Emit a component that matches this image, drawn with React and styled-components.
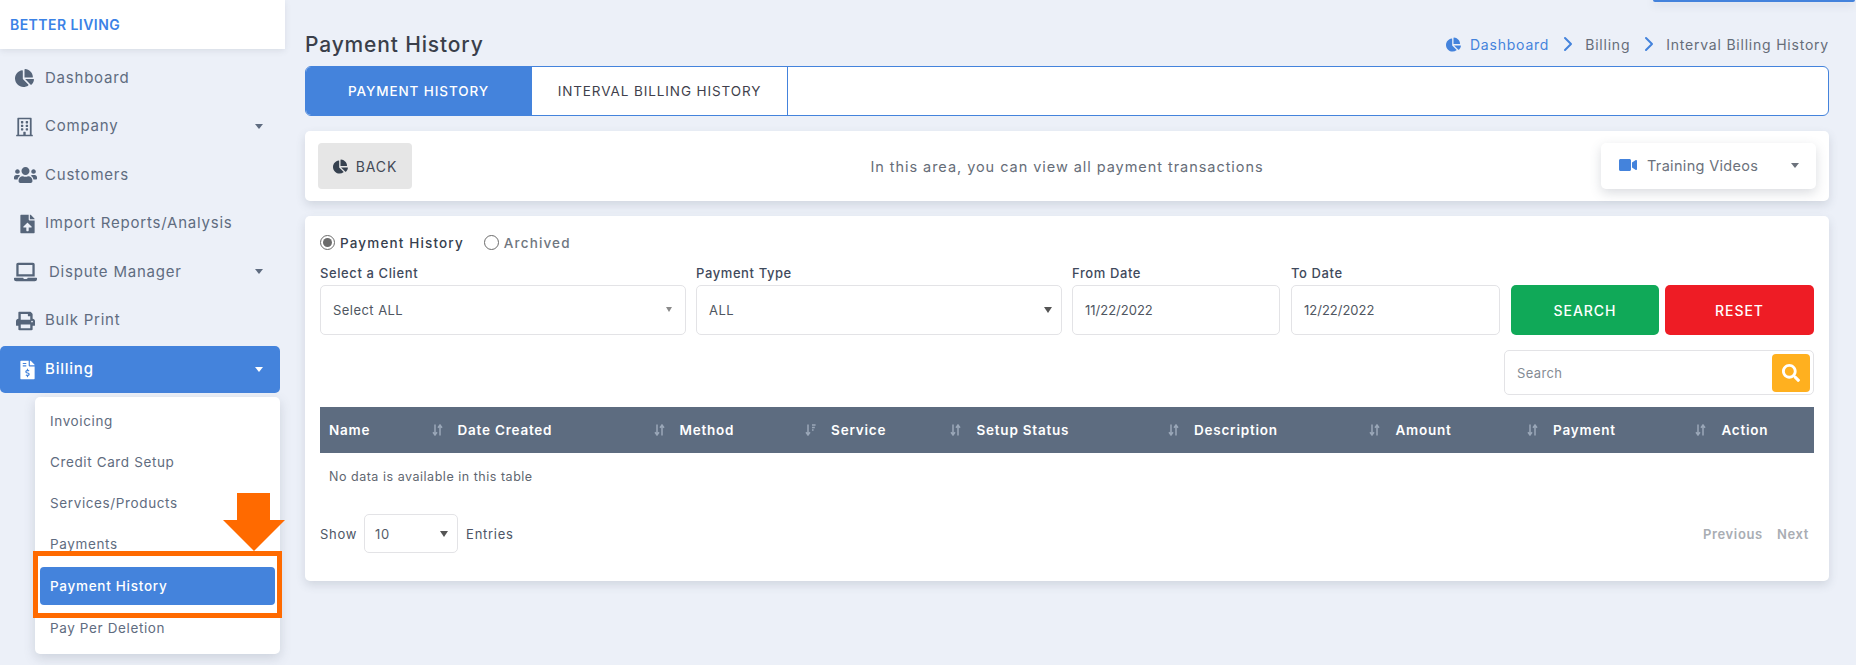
import React from 'react';
import styled, { createGlobalStyle } from 'styled-components';
import { FaChartPie, FaRegBuilding, FaUsers, FaFileUpload, FaLaptop, FaPrint, FaFileInvoiceDollar, FaVideo, FaSearch } from 'react-icons/fa';
import { ChevronRight } from 'lucide-react';

const Global = createGlobalStyle`
  html, body { margin: 0; padding: 0; background: #fff; }
  body { font-family: Inter, "Open Sans", sans-serif; overflow: hidden; }
  * { box-sizing: border-box; }
`;

const Page = styled.div`
  width: 1856px;
  height: 665px;
  background: #ecf0f8;
  display: flex;
  position: relative;
  overflow: hidden;
`;

const TopStrip = styled.div`
  position: absolute;
  top: 0;
  left: 1653px;
  width: 202px;
  height: 2px;
  background: #4483dc;
  border-radius: 0 0 4px 4px;
  box-shadow: 0 2px 8px rgba(60, 70, 90, 0.25);
`;

const Sidebar = styled.aside`
  width: 305px;
  flex: none;
  display: flex;
  flex-direction: column;
`;

const Brand = styled.div`
  width: 285px;
  height: 49px;
  background: #fff;
  box-shadow: 0 2px 6px rgba(80, 90, 110, 0.12);
  padding: 0 0 0 10px;
  display: flex;
  align-items: center;
  font-size: 14px;
  font-weight: 600;
  color: #3b82e6;
  letter-spacing: 0.45px;
`;

const Nav = styled.nav`
  width: 280px;
  padding-top: 5px;
  display: flex;
  flex-direction: column;
`;

const NavItem = styled.div`
  height: ${p => (p.$active ? 47 : 48.5)}px;
  margin-top: ${p => (p.$active ? 1 : 0)}px;
  display: flex;
  align-items: center;
  position: relative;
  padding-left: ${p => p.$pad || 45}px;
  padding-bottom: 2px;
  font-size: 15px;
  letter-spacing: 0.78px;
  color: ${p => (p.$active ? '#fff' : '#5f6c80')};
  background: ${p => (p.$active ? '#4483dc' : 'transparent')};
  border-radius: ${p => (p.$active ? '5px' : '0')};
  font-weight: ${p => (p.$active ? 500 : 400)};
`;

const IconSlot = styled.span`
  position: absolute;
  left: ${p => p.$left || 15}px;
  top: 50%;
  transform: translateY(-50%);
  display: flex;
  font-size: ${p => p.$size || 19}px;
  color: ${p => (p.$active ? '#fff' : '#56657a')};
`;

const Caret = styled.span`
  position: absolute;
  right: ${p => p.$right || 17}px;
  top: 50%;
  margin-top: -3px;
  width: 0;
  height: 0;
  border-left: 4.5px solid transparent;
  border-right: 4.5px solid transparent;
  border-top: 5px solid ${p => p.$color || '#5f6c80'};
`;

const SubMenu = styled.div`
  margin: 4px 0 0 35px;
  width: 245px;
  height: 257px;
  background: #fff;
  border-radius: 5px;
  box-shadow: 0 4px 12px rgba(80, 90, 110, 0.2);
  padding: 3px 5px 0;
  display: flex;
  flex-direction: column;
  position: relative;
`;

const SubItem = styled.div`
  height: ${p => (p.$active ? 38 : 41)}px;
  margin: ${p => (p.$active ? '3px 0 2px' : '0')};
  display: flex;
  align-items: center;
  padding-left: 10px;
  font-size: 13.5px;
  letter-spacing: ${p => (p.$active ? 0.72 : 0.62)}px;
  color: ${p => (p.$active ? '#fff' : '#5f6c80')};
  font-weight: ${p => (p.$active ? 500 : 400)};
  background: ${p => (p.$active ? '#4483dc' : 'transparent')};
  border-radius: ${p => (p.$active ? '4px' : '0')};
`;

const Highlight = styled.div`
  position: absolute;
  left: -2px;
  top: 154px;
  width: 249px;
  height: 67px;
  border: 5px solid #ff6a00;
  pointer-events: none;
`;

const ArrowMark = styled.svg`
  position: absolute;
  left: 188px;
  top: 96px;
  width: 62px;
  height: 58px;
`;

const Main = styled.main`
  width: 1524px;
  flex: none;
  display: flex;
  flex-direction: column;
`;

const TitleRow = styled.div`
  height: 66px;
  padding-top: 32px;
  display: flex;
  justify-content: space-between;
  align-items: flex-start;
`;

const Title = styled.h1`
  margin: 1px 0 0;
  font-size: 21px;
  line-height: 24px;
  font-weight: 500;
  color: #3a3f4a;
  letter-spacing: 0.85px;
`;

const Crumbs = styled.div`
  display: flex;
  align-items: center;
  height: 24px;
  font-size: 14px;
  letter-spacing: 0.78px;
  color: #666d78;
`;

const CrumbLink = styled.span`
  color: #4483dc;
  display: flex;
  align-items: center;
  gap: 9px;
  font-size: 14px;
`;

const CrumbSep = styled.span`
  display: flex;
  color: #4483dc;
  margin: 0 5px 0 7px;
`;

const Tabs = styled.div`
  height: 50px;
  background: #fff;
  border: 1px solid #4483dc;
  border-radius: 6px;
  display: flex;
  overflow: hidden;
`;

const Tab = styled.div`
  width: ${p => p.$w}px;
  display: flex;
  align-items: center;
  justify-content: center;
  font-size: 13.5px;
  letter-spacing: 0.9px;
  color: ${p => (p.$active ? '#fff' : '#3f3f4c')};
  background: ${p => (p.$active ? '#4483dc' : '#fff')};
  font-weight: ${p => (p.$active ? 500 : 400)};
  border-right: 1px solid #4483dc;
`;

const Card = styled.section`
  background: #fff;
  border-radius: 5px;
  box-shadow: 0 4px 10px rgba(70, 80, 100, 0.16);
`;

const InfoCard = styled(Card)`
  margin-top: 15px;
  height: 70px;
  padding: 12px 13px;
  display: grid;
  grid-template-columns: 1fr auto 1fr;
  align-items: center;
`;

const BackButton = styled.div`
  width: 94px;
  height: 46px;
  background: #e6e6e6;
  border-radius: 4px;
  display: flex;
  align-items: center;
  justify-content: center;
  gap: 8px;
  font-size: 14px;
  letter-spacing: 0.9px;
  color: #444b57;
  svg { font-size: 15px; color: #36414f; }
`;

const InfoText = styled.div`
  font-size: 14.5px;
  letter-spacing: 0.95px;
  color: #666d78;
`;

const VideoButton = styled.div`
  width: 215px;
  height: 46px;
  justify-self: end;
  background: #fff;
  border-radius: 5px;
  box-shadow: 0 4px 12px rgba(70, 80, 100, 0.2);
  display: flex;
  align-items: center;
  padding: 0 0 2px 18px;
  gap: 10px;
  position: relative;
  font-size: 14.5px;
  letter-spacing: 0.32px;
  color: #6c727c;
  svg { font-size: 18px; color: #4483dc; }
`;

const FilterCard = styled(Card)`
  margin-top: 15px;
  height: 365px;
  padding: 0 15px;
  display: flex;
  flex-direction: column;
`;

const RadioRow = styled.div`
  height: 27px;
  margin-top: 13px;
  display: flex;
  align-items: center;
`;

const RadioDot = styled.span`
  width: 15px;
  height: 15px;
  border: 1px solid #6b6b6b;
  border-radius: 50%;
  background: #fff;
  margin-right: 5px;
  display: flex;
  align-items: center;
  justify-content: center;
  &::after {
    content: '';
    display: ${p => (p.$on ? 'block' : 'none')};
    width: 9px;
    height: 9px;
    border-radius: 50%;
    background: #6b6b6b;
  }
`;

const RadioLabel = styled.span`
  font-size: 13.5px;
  font-weight: 500;
  letter-spacing: 1.15px;
  color: ${p => (p.$on ? '#36404e' : '#6f7680')};
  margin-right: ${p => (p.$on ? 20 : 0)}px;
`;

const FilterRow = styled.div`
  display: flex;
  margin-top: 7px;
`;

const Field = styled.div`
  width: ${p => p.$w}px;
  margin-right: ${p => p.$gap}px;
  flex: none;
`;

const FieldLabel = styled.div`
  height: 22px;
  font-size: 13px;
  line-height: 20px;
  font-weight: 500;
  letter-spacing: 0.6px;
  color: #3f4a5c;
`;

const Control = styled.div`
  height: 50px;
  border: 1px solid #e3e3e6;
  border-radius: 5px;
  display: flex;
  align-items: center;
  padding-left: ${p => p.$pad || 12}px;
  position: relative;
  font-size: 13px;
  letter-spacing: ${p => (p.$ls === undefined ? 0.45 : p.$ls)}px;
  color: #4f5661;
  background: #fff;
`;

const Arrow = styled.span`
  position: absolute;
  right: ${p => p.$right}px;
  top: 50%;
  margin-top: -3px;
  width: 0;
  height: 0;
  border-left: ${p => p.$size}px solid transparent;
  border-right: ${p => p.$size}px solid transparent;
  border-top: ${p => p.$size * 1.5}px solid ${p => p.$color};
`;

const ActionRow = styled.div`
  display: flex;
  gap: 6px;
  margin-top: 22px;
  margin-left: 11px;
`;

const ActionButton = styled.div`
  width: ${p => p.$w}px;
  height: 50px;
  border-radius: 5px;
  background: ${p => p.$bg};
  color: #fff;
  font-size: 14px;
  font-weight: 500;
  letter-spacing: 0.95px;
  display: flex;
  align-items: center;
  justify-content: center;
`;

const SearchRow = styled.div`
  display: flex;
  justify-content: flex-end;
  margin-top: 15px;
`;

const SearchBox = styled.div`
  width: 310px;
  height: 45px;
  border: 1px solid #e3e3e6;
  border-radius: 5px;
  padding: 3px;
  padding-left: 12px;
  display: flex;
  align-items: center;
  justify-content: space-between;
  font-size: 13px;
  letter-spacing: 0.35px;
  color: #858b94;
`;

const SearchIconBox = styled.div`
  width: 38px;
  height: 38px;
  background: #ffb01f;
  border-radius: 4px;
  display: flex;
  align-items: center;
  justify-content: center;
  color: #fff;
  font-size: 18px;
`;

const TableHead = styled.div`
  display: grid;
  grid-template-columns: 128.5px 222px 151.6px 145.4px 217.5px 201.5px 157.6px 168.4px 100px;
  height: 46px;
  margin-top: 12px;
  background: #5d6c80;
`;

const HeadCell = styled.div`
  display: flex;
  align-items: center;
  justify-content: space-between;
  padding: 0 6px 0 9px;
  font-size: 13.5px;
  font-weight: 600;
  letter-spacing: 0.78px;
  color: #fff;
  white-space: nowrap;
`;

const SortSvg = styled.svg`
  width: 11px;
  height: 12px;
  flex: none;
`;

const EmptyRow = styled.div`
  height: 46px;
  display: flex;
  align-items: center;
  padding-left: 9px;
  font-size: 12.5px;
  letter-spacing: 0.52px;
  color: #5f6670;
`;

const Footer = styled.div`
  margin-top: 15px;
  display: flex;
  align-items: center;
  justify-content: space-between;
  padding-right: 5px;
`;

const Entries = styled.div`
  display: flex;
  align-items: center;
  font-size: 13px;
  letter-spacing: 0.72px;
  color: #4e5666;
`;

const EntriesSelect = styled.div`
  width: 94px;
  height: 39px;
  margin: 0 8px 0 7px;
  border: 1px solid #e3e3e6;
  border-radius: 5px;
  display: flex;
  align-items: center;
  padding-left: 10px;
  position: relative;
  color: #555c68;
`;

const Pager = styled.div`
  display: flex;
  gap: 14px;
  font-size: 13px;
  font-weight: 600;
  letter-spacing: 0.65px;
  color: #a9adb3;
`;

const Sort = ({ active }) => (
  <SortSvg viewBox="0 0 11 12">
    <path d="M3 0.5v10M1 8.3L3 11l2-2.7" stroke="#9aa7b8" strokeWidth="1.5" fill="none" />
    {active ? (
      <path d="M7 1h3.6M7 3.5h2.8M7 6h1.6" stroke="#9aa7b8" strokeWidth="1.3" fill="none" />
    ) : (
      <path d="M8 11.5v-10M6 3.7L8 1l2 2.7" stroke="#9aa7b8" strokeWidth="1.5" fill="none" />
    )}
  </SortSvg>
);

const navItems = [
  { label: 'Dashboard', Icon: FaChartPie },
  { label: 'Company', Icon: FaRegBuilding, caret: true },
  { label: 'Customers', Icon: FaUsers, left: 14, size: 23 },
  { label: 'Import Reports/Analysis', Icon: FaFileUpload, left: 18, size: 19 },
  { label: 'Dispute Manager', Icon: FaLaptop, caret: true, pad: 49, left: 14, size: 23 },
  { label: 'Bulk Print', Icon: FaPrint, left: 16, size: 19 },
];

const subItems = ['Invoicing', 'Credit Card Setup', 'Services/Products', 'Payments', 'Payment History', 'Pay Per Deletion'];

const columns = [
  ['Name'], ['Date Created'], ['Method', true], ['Service'], ['Setup Status'], ['Description'], ['Amount'], ['Payment'], ['Action'],
];

export default function App() {
  return (
    <>
      <Global />
      <Page>
        <TopStrip />
        <Sidebar>
          <Brand>BETTER LIVING</Brand>
          <Nav>
            {navItems.map(({ label, Icon, caret, pad, left, size }) => (
              <NavItem key={label} $pad={pad}>
                <IconSlot $left={left} $size={size}><Icon /></IconSlot>
                {label}
                {caret && <Caret />}
              </NavItem>
            ))}
            <NavItem $active>
              <IconSlot $left={18} $size={19} $active><FaFileInvoiceDollar /></IconSlot>
              Billing
              <Caret $color="#fff" />
            </NavItem>
            <SubMenu>
              {subItems.map(label => (
                <SubItem key={label} $active={label === 'Payment History'}>{label}</SubItem>
              ))}
              <ArrowMark viewBox="0 0 62 58">
                <path d="M14 0h33v27h15L31 58 0 27h14z" fill="#ff6a00" />
              </ArrowMark>
              <Highlight />
            </SubMenu>
          </Nav>
        </Sidebar>
        <Main>
          <TitleRow>
            <Title>Payment History</Title>
            <Crumbs>
              <CrumbLink><FaChartPie size={15} />Dashboard</CrumbLink>
              <CrumbSep><ChevronRight size={24} strokeWidth={2} /></CrumbSep>
              Billing
              <CrumbSep><ChevronRight size={24} strokeWidth={2} /></CrumbSep>
              Interval Billing History
            </Crumbs>
          </TitleRow>
          <Tabs>
            <Tab $w={226} $active>PAYMENT HISTORY</Tab>
            <Tab $w={256}>INTERVAL BILLING HISTORY</Tab>
          </Tabs>
          <InfoCard>
            <BackButton><FaChartPie />BACK</BackButton>
            <InfoText>In this area, you can view all payment transactions</InfoText>
            <VideoButton>
              <FaVideo />Training Videos
              <Caret $right={17} $color="#6c727c" />
            </VideoButton>
          </InfoCard>
          <FilterCard>
            <RadioRow>
              <RadioDot $on />
              <RadioLabel $on>Payment History</RadioLabel>
              <RadioDot />
              <RadioLabel>Archived</RadioLabel>
            </RadioRow>
            <FilterRow>
              <Field $w={366} $gap={10}>
                <FieldLabel>Select a Client</FieldLabel>
                <Control>Select ALL<Arrow $right={13} $size={3.5} $color="#8a8a8a" /></Control>
              </Field>
              <Field $w={366} $gap={10}>
                <FieldLabel>Payment Type</FieldLabel>
                <Control>ALL<Arrow $right={9} $size={4} $color="#555" /></Control>
              </Field>
              <Field $w={208} $gap={11}>
                <FieldLabel>From Date</FieldLabel>
                <Control $ls={0}>11/22/2022</Control>
              </Field>
              <Field $w={209} $gap={0}>
                <FieldLabel>To Date</FieldLabel>
                <Control $ls={0}>12/22/2022</Control>
              </Field>
              <ActionRow>
                <ActionButton $w={148} $bg="#10a958">SEARCH</ActionButton>
                <ActionButton $w={149} $bg="#ee1c25">RESET</ActionButton>
              </ActionRow>
            </FilterRow>
            <SearchRow>
              <SearchBox>
                Search
                <SearchIconBox><FaSearch /></SearchIconBox>
              </SearchBox>
            </SearchRow>
            <TableHead>
              {columns.map(([label, active], i) => (
                <HeadCell key={label}>
                  {label}
                  {i < columns.length - 1 && <Sort active={active} />}
                </HeadCell>
              ))}
            </TableHead>
            <EmptyRow>No data is available in this table</EmptyRow>
            <Footer>
              <Entries>
                Show
                <EntriesSelect>10<Arrow $right={9} $size={4} $color="#555" /></EntriesSelect>
                Entries
              </Entries>
              <Pager><span>Previous</span><span>Next</span></Pager>
            </Footer>
          </FilterCard>
        </Main>
      </Page>
    </>
  );
}
